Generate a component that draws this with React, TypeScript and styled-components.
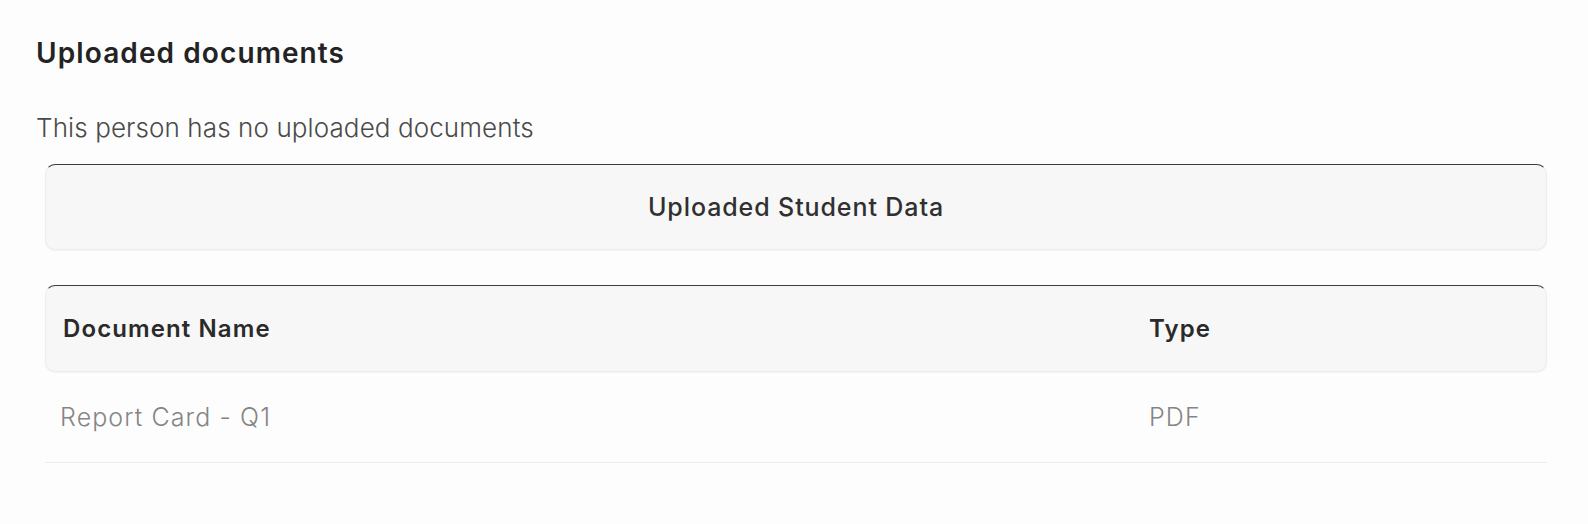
import { FC } from 'react';
import styled, { createGlobalStyle } from 'styled-components';

const GlobalStyle = createGlobalStyle`
  html, body {
    margin: 0;
    padding: 0;
    background: #fdfdfd;
  }
  body {
    font-family: Inter, "Open Sans", sans-serif;
    color: #222;
  }
`;

const Page = styled.div`
  padding: 31px 34px 40px 36px;
  width: 1588px;
  box-sizing: border-box;
`;

const Title = styled.h2`
  margin: 0;
  font-size: 28px;
  line-height: 44px;
  font-weight: 600;
  letter-spacing: 1.1px;
  color: #232323;
`;

const EmptyNote = styled.p`
  margin: 35px 0 0 0;
  font-size: 26px;
  line-height: 36px;
  font-weight: 300;
  letter-spacing: 0.1px;
  color: #4a4a4a;
`;

const Panel = styled.div`
  margin: 18px 7px 0 9px;
  border: 1px solid #ececec;
  border-top: 1.5px solid #3c3c3c;
  border-radius: 10px;
  background: #f7f7f7;
  box-shadow: 0 1px 2px rgba(0, 0, 0, 0.04);
`;

const PanelTitle = styled.div`
  height: 84px;
  display: flex;
  align-items: center;
  justify-content: center;
  font-size: 25px;
  font-weight: 500;
  letter-spacing: 0.9px;
  color: #303030;
`;

const TableWrap = styled.div`
  margin: 35px 7px 0 9px;
`;

const Row = styled.div<{ $head?: boolean }>`
  display: grid;
  grid-template-columns: 1086px 1fr;
  align-items: center;
  padding: 0 17px;
  height: ${p => (p.$head ? '85px' : '90px')};
  font-size: ${p => (p.$head ? '24px' : '25px')};
  letter-spacing: ${p => (p.$head ? '1.1px' : '1.1px')};
  font-weight: ${p => (p.$head ? 600 : 300)};
  color: ${p => (p.$head ? '#2a2a2a' : '#858585')};
`;

const HeadPanel = styled(Panel)`
  margin: 0;
`;

const BodyRow = styled(Row)`
  grid-template-columns: 1089px 1fr;
  border-bottom: 1px solid #ececec;
  padding-left: 15px;
`;

type TDoc = { name: string; type: string };

const docs: TDoc[] = [{ name: 'Report Card - Q1', type: 'PDF' }];

const App: FC = () => (
  <>
    <GlobalStyle />
    <Page>
      <Title>Uploaded documents</Title>
      <EmptyNote>This person has no uploaded documents</EmptyNote>
      <Panel>
        <PanelTitle>Uploaded Student Data</PanelTitle>
      </Panel>
      <TableWrap>
        <HeadPanel>
          <Row $head>
            <span>Document Name</span>
            <span>Type</span>
          </Row>
        </HeadPanel>
        {docs.map(d => (
          <BodyRow key={d.name}>
            <span>{d.name}</span>
            <span>{d.type}</span>
          </BodyRow>
        ))}
      </TableWrap>
    </Page>
  </>
);

export default App;
